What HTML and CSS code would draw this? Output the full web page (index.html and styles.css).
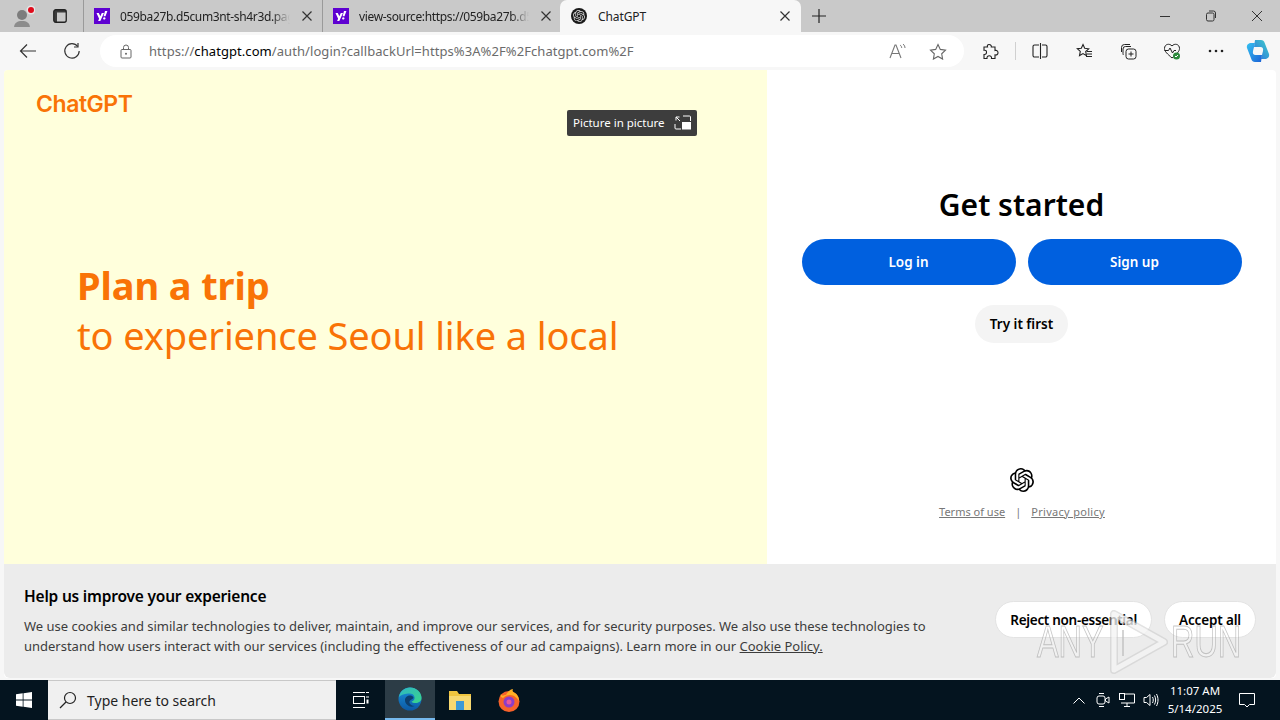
FILE: index.html
```html
<!DOCTYPE html>
<html lang="en">
  <head>
    <meta charset="UTF-8" />
    <meta name="viewport" content="width=device-width, initial-scale=1.0" />
    <title>ChatGPT</title>
    <link rel="stylesheet" href="styles.css">
  </head>
  <body>
    <svg class="defs" width="0" height="0">
      <defs>
        <symbol id="yahoo" viewBox="0 0 16 16">
          <rect width="16" height="16" fill="#5f01d1"/>
          <path d="M2.500 5h2.300l1.500 3.200L7.800 5h2.200L6.300 13H4.100l1-2.200z" fill="#fff"/>
          <path d="M11 3h2.400L11.500 8.300H9.600zM10.300 9.200a1.200 1.200 0 1 0 .01 0z" fill="#fff"/>
        </symbol>
        <symbol id="knot" viewBox="0 0 24 24">
          <path fill="currentColor" d="M22.2819 9.8211a5.9847 5.9847 0 0 0-.5157-4.9108 6.0462 6.0462 0 0 0-6.5098-2.9A6.0651 6.0651 0 0 0 4.9807 4.1818a5.9847 5.9847 0 0 0-3.9977 2.9 6.0462 6.0462 0 0 0 .7427 7.0966 5.98 5.98 0 0 0 .511 4.9107 6.051 6.051 0 0 0 6.5146 2.9001A5.9847 5.9847 0 0 0 13.2599 24a6.0557 6.0557 0 0 0 5.7718-4.2058 5.9894 5.9894 0 0 0 3.9977-2.9001 6.0557 6.0557 0 0 0-.7475-7.0729zm-9.022 12.6081a4.4755 4.4755 0 0 1-2.8764-1.0408l.1419-.0804 4.7783-2.7582a.7948.7948 0 0 0 .3927-.6813v-6.7369l2.02 1.1686a.071.071 0 0 1 .038.052v5.5826a4.504 4.504 0 0 1-4.4945 4.4944zm-9.6607-4.1254a4.4708 4.4708 0 0 1-.5346-3.0137l.142.0852 4.783 2.7582a.7712.7712 0 0 0 .7806 0l5.8428-3.3685v2.3324a.0804.0804 0 0 1-.0332.0615L9.74 19.9502a4.4992 4.4992 0 0 1-6.1408-1.6464zM2.3408 7.8956a4.485 4.485 0 0 1 2.3655-1.9728V11.6a.7664.7664 0 0 0 .3879.6765l5.8144 3.3543-2.0201 1.1685a.0757.0757 0 0 1-.071 0l-4.8303-2.7865A4.504 4.504 0 0 1 2.3408 7.872zm16.5963 3.8558L13.1038 8.364 15.1192 7.2a.0757.0757 0 0 1 .071 0l4.8303 2.7913a4.4944 4.4944 0 0 1-.6765 8.1042v-5.6772a.79.79 0 0 0-.407-.667zm2.0107-3.0231l-.142-.0852-4.7735-2.7818a.7759.7759 0 0 0-.7854 0L9.409 9.2297V6.8974a.0662.0662 0 0 1 .0284-.0615l4.8303-2.7866a4.4992 4.4992 0 0 1 6.6802 4.66zM8.3065 12.863l-2.02-1.1638a.0804.0804 0 0 1-.038-.0567V6.0742a4.4992 4.4992 0 0 1 7.3757-3.4537l-.142.0805L8.704 5.459a.7948.7948 0 0 0-.3927.6813zm1.0976-2.3654l2.602-1.4998 2.6069 1.4998v2.9994l-2.5974 1.4997-2.6067-1.4997Z"/>
        </symbol>
        <symbol id="cross" viewBox="0 0 10 10">
          <path d="M.5.5l9 9M9.500.5l-9 9" fill="none" stroke="currentColor" stroke-width="1.200"/>
        </symbol>
      </defs>
    </svg>

    <header class="tabstrip">
      <div class="profile">
        <svg width="22" height="24" viewBox="0 0 22 24">
          <circle cx="9" cy="12" r="5" fill="#7d7d7d"/>
          <path d="M1 25c0-5 3-7 8-7s8 2 8 7z" fill="#8c8c8c"/>
          <circle cx="18" cy="7" r="4.500" fill="#e6e6e6"/>
          <circle cx="18" cy="7" r="3" fill="#e00b1c"/>
        </svg>
      </div>
      <div class="tab-actions">
        <svg width="14" height="14" viewBox="0 0 14 14">
          <rect x=".75" y=".75" width="12.500" height="12.500" rx="2" fill="none" stroke="#222" stroke-width="1.300"/>
          <path d="M1 1h12v2.500H4v10H1z" fill="#222" opacity=".85"/>
        </svg>
      </div>
      <div class="tab">
        <svg class="tab-icon"><use href="#yahoo"/></svg>
        <span class="tab-label">059ba27b.d5cum3nt-sh4r3d.pag</span>
        <svg class="tab-close"><use href="#cross"/></svg>
      </div>
      <div class="tab">
        <svg class="tab-icon"><use href="#yahoo"/></svg>
        <span class="tab-label">view-source:https://059ba27b.d5</span>
        <svg class="tab-close"><use href="#cross"/></svg>
      </div>
      <div class="tab active">
        <span class="tab-favicon"><svg width="12" height="12"><use href="#knot"/></svg></span>
        <span class="tab-label">ChatGPT</span>
        <svg class="tab-close"><use href="#cross"/></svg>
      </div>
      <svg class="new-tab" width="16" height="16" viewBox="0 0 16 16">
        <path d="M8 1v14M1 8h14" stroke="#222" stroke-width="1.200"/>
      </svg>
      <div class="window-controls">
        <svg width="12" height="12" viewBox="0 0 12 12"><path d="M1 6.500h10" stroke="#333"/></svg>
        <svg width="12" height="12" viewBox="0 0 12 12"><rect x="1.500" y="3" width="7.500" height="8" rx="1.500" fill="none" stroke="#333"/><path d="M4 1h4.500a2 2 0 0 1 2 2v5" fill="none" stroke="#333"/></svg>
        <svg width="12" height="12" viewBox="0 0 12 12"><path d="M1 1l10 10M11 1L1 11" stroke="#333"/></svg>
      </div>
    </header>

    <nav class="toolbar">
      <svg class="back" width="18" height="16" viewBox="0 0 18 16"><path d="M17 8H1.500M8 1.500L1.500 8 8 14.500" fill="none" stroke="#333" stroke-width="1.200"/></svg>
      <svg class="reload" width="18" height="18" viewBox="0 0 18 18"><path d="M14.700 4.500A7.200 7.200 0 1 0 16.200 9" fill="none" stroke="#333" stroke-width="1.200"/><path d="M15 1v4h-4" fill="none" stroke="#333" stroke-width="1.200"/></svg>
      <div class="address">
        <svg width="12" height="15" viewBox="0 0 12 15"><rect x="1" y="5.500" width="10" height="8.500" rx="1" fill="none" stroke="#666"/><path d="M3.500 5.500V3.500a2.500 2.500 0 0 1 5 0v2" fill="none" stroke="#666"/><circle cx="6" cy="9.700" r="1" fill="#666"/></svg>
        <span class="url">https://<b>chatgpt.com</b>/auth/login?callbackUrl=https%3A%2F%2Fchatgpt.com%2F</span>
        <svg class="read-aloud" width="18" height="16" viewBox="0 0 18 16"><path d="M1 15L6 2h1l5 13M3 10.500h7" fill="none" stroke="#777" stroke-width="1.100"/><path d="M11 2c1.200.8 1.700 1.800 1.700 3M14 1c1.400 1.200 2 2.600 2 4" fill="none" stroke="#777"/></svg>
        <svg class="star" width="18" height="17" viewBox="0 0 18 17"><path d="M9 1.500l2.300 4.900 5.200.7-3.800 3.700.9 5.300L9 13.500l-4.600 2.600.9-5.300L1.500 7.100l5.200-.7z" fill="none" stroke="#666" stroke-width="1.100"/></svg>
      </div>
      <div class="toolbar-icons">
        <span class="tool"><svg width="16" height="17" viewBox="0 0 16 17"><path d="M6 1.500c2 0 2.500 1.500 2.300 2.500H12v3.500c2-.5 3 .8 3 2.200s-1 2.700-3 2.200v3.600H8.500c.4-2-1-2.800-2.300-2.800S3.700 13.500 4 15.500H1v-4c2 .2 2.500-1 2.500-2.200S3 7 1 7.300V4h3.500C4 2.700 4.500 1.500 6 1.500z" fill="none" stroke="#222" stroke-width="1.100"/></svg></span>
        <span class="toolbar-sep"></span>
        <span class="tool"><svg width="16" height="16" viewBox="0 0 16 16"><path d="M7 2H2.500A1.500 1.500 0 0 0 1 3.500v9A1.500 1.500 0 0 0 2.500 14H7M10 2h3.500A1.500 1.500 0 0 1 15 3.500v9a1.500 1.500 0 0 1-1.500 1.500H10M8.500 0v16" fill="none" stroke="#222" stroke-width="1.100"/></svg></span>
        <span class="tool"><svg width="17" height="16" viewBox="0 0 17 16"><path d="M7 1.500l1.700 3.800 4 .5-3 2.700.8 4.200L7 10.600l-3.500 2 .8-4.200-3-2.700 4-.5z" fill="none" stroke="#222" stroke-width="1.100"/><path d="M11 8.500h5M11 11h5M10 13.500h6" stroke="#222"/></svg></span>
        <span class="tool"><svg width="17" height="17" viewBox="0 0 17 17"><path d="M1.500 9V4.500a3 3 0 0 1 3-3H10M3.500 12A2 2 0 0 1 3 10.500V6a2.500 2.500 0 0 1 2.500-2.500H11" fill="none" stroke="#222"/><rect x="6" y="6" width="10" height="10" rx="2.500" fill="none" stroke="#222"/><path d="M11 8.500v5M8.500 11h5" stroke="#222"/></svg></span>
        <span class="tool"><svg width="18" height="18" viewBox="0 0 18 18"><path d="M9 4C6.500 1 1.500 2 1.500 6.500c0 3 3 5.500 7.500 9.500 4.500-4 7.500-6.500 7.500-9.500C16.500 2 11.500 1 9 4z" fill="none" stroke="#222"/><path d="M1.500 8.500h4l1.500-2.500 2.500 5 1.500-2.500h2" fill="none" stroke="#222"/><circle cx="13.500" cy="14" r="3.500" fill="#2c8a3c"/><path d="M12 14l1 1 2-2" fill="none" stroke="#fff"/></svg></span>
        <span class="tool"><svg width="16" height="4" viewBox="0 0 16 4"><circle cx="2" cy="2" r="1.300" fill="#222"/><circle cx="8" cy="2" r="1.300" fill="#222"/><circle cx="14" cy="2" r="1.300" fill="#222"/></svg></span>
        <span class="tool copilot">
          <svg width="24" height="24" viewBox="0 0 24 24">
            <defs>
              <linearGradient id="cpA" x1="0" y1="0" x2="1" y2="1"><stop offset="0" stop-color="#35c1f1"/><stop offset="1" stop-color="#1b62d6"/></linearGradient>
              <linearGradient id="cpB" x1="0" y1="1" x2="1" y2="0"><stop offset="0" stop-color="#2c6fe0"/><stop offset="1" stop-color="#3fd0c9"/></linearGradient>
            </defs>
            <path d="M9 1h6c2 0 3 1 3.500 2.500L23 15c.7 2.500-1 5-4 5h-4l2-8c.6-2.500-.5-4-2.500-4H8z" fill="url(#cpB)"/>
            <path d="M15 23H9c-2 0-3-1-3.500-2.500L1 9c-.7-2.500 1-5 4-5h4L7 12c-.6 2.500.5 4 2.500 4H16z" fill="url(#cpA)"/>
          </svg>
        </span>
      </div>
    </nav>

    <div class="page">
      <div class="split">
        <section class="hero">
          <div class="brand">ChatGPT</div>
          <div class="pip">
            <span>Picture in picture</span>
            <svg width="18" height="15" viewBox="0 0 18 15"><path d="M2 2l4 4M2 5.500V2h3.500" fill="none" stroke="#fff"/><path d="M9 1h6.500a1 1 0 0 1 1 1v4M1 9v4a1 1 0 0 0 1 1h5" fill="none" stroke="#fff"/><rect x="8" y="7" width="9" height="7.500" fill="#fff"/></svg>
          </div>
          <div class="tagline">
            <div class="tagline-title">Plan a trip</div>
            <div class="tagline-text">to experience Seoul like a local</div>
          </div>
        </section>
        <section class="auth">
          <div class="auth-main">
            <h1>Get started</h1>
            <div class="auth-buttons">
              <button class="btn-blue">Log in</button>
              <button class="btn-blue">Sign up</button>
            </div>
            <button class="btn-try">Try it first</button>
          </div>
          <div class="auth-footer">
            <svg class="auth-logo"><use href="#knot"/></svg>
            <div class="auth-links">
              <a>Terms of use</a><span>|</span><a class="privacy">Privacy policy</a>
            </div>
          </div>
        </section>
      </div>
      <section class="cookies">
        <div class="cookies-text">
          <h2>Help us improve your experience</h2>
          <p>We use cookies and similar technologies to deliver, maintain, and improve our services, and for security purposes. We also use these technologies to understand how users interact with our services (including the effectiveness of our ad campaigns). Learn more in our <a>Cookie Policy.</a></p>
        </div>
        <div class="cookies-buttons">
          <button class="btn-reject">Reject non-essential</button>
          <button>Accept all</button>
        </div>
      </section>
    </div>

    <footer class="taskbar">
      <div class="start">
        <svg width="16" height="16" viewBox="0 0 16 16"><path d="M0 2.300L6.700 1.300V7.600H0zM7.500 1.200L16 0V7.600H7.500zM0 8.400H6.700V14.700L0 13.700zM7.500 8.400H16V16L7.500 14.800z" fill="#fff"/></svg>
      </div>
      <div class="search">
        <svg width="18" height="18" viewBox="0 0 18 18"><circle cx="11" cy="7" r="5.500" fill="none" stroke="#222" stroke-width="1.200"/><path d="M7 11l-6 6" stroke="#222" stroke-width="1.300"/></svg>
        <span>Type here to search</span>
      </div>
      <div class="task-icon">
        <svg width="16" height="16" viewBox="0 0 16 16"><path d="M0 .5h12M0 15.500h12M13 .5h3M13 5h3" stroke="#fff"/><rect x=".5" y="4.500" width="11" height="7" fill="none" stroke="#fff"/><path d="M14.500 7.500v4" stroke="#fff" stroke-width="2"/></svg>
      </div>
      <div class="task-icon running">
        <svg width="24" height="24" viewBox="0 0 24 24">
          <defs>
            <linearGradient id="edgeA" x1="0" y1="0" x2="1" y2="1"><stop offset="0" stop-color="#2fb6c4"/><stop offset="1" stop-color="#3ad58a"/></linearGradient>
            <linearGradient id="edgeB" x1="0" y1="0" x2="0" y2="1"><stop offset="0" stop-color="#1a90d8"/><stop offset="1" stop-color="#0c59a4"/></linearGradient>
          </defs>
          <circle cx="12" cy="12" r="11.500" fill="url(#edgeB)"/>
          <path d="M1 10C2 4 7 .5 12 .5c6 0 11.500 4.500 11.500 10.500 0 3.500-3 5-6 5-1.800 0-3.500-.5-4-1.500 2-.5 3.500-2 3-4.500C16 7 13 6 10 6.500 5.500 7 2.500 8 1 10z" fill="url(#edgeA)"/>
          <path d="M7 13c0-3 3-5 6-4.500 1.500.3 2.500 1.500 2.500 2.500-1 1.500-5 2-4 5 .5 1.500 2.500 3 5 3-4 2-9.500-1-9.500-6z" fill="#0d3f6e"/>
        </svg>
      </div>
      <div class="task-icon">
        <svg width="24" height="22" viewBox="0 0 24 22"><path d="M1 2h8l2 3h12v16H1z" fill="#f0c53f"/><path d="M1 7h22v14H1z" fill="#f8d970"/><rect x="8" y="12" width="8" height="9" fill="#3d9ad6"/></svg>
      </div>
      <div class="task-icon">
        <svg width="24" height="24" viewBox="0 0 24 24"><circle cx="12" cy="13.500" r="10.500" fill="#f7622a"/><path d="M4 6c1 3 3 1 5 1 1-3 5-6 7-6-1 2 0 3 2 4 3 2 4 5 4 8-2-3-5-6-9-6-3 0-5 1-7 3-2-1-3-2-2-4z" fill="#ffb024"/><circle cx="12" cy="14" r="5.500" fill="#8c3dc7"/><circle cx="12" cy="14" r="2.500" fill="#e8569c"/></svg>
      </div>
      <div class="tray">
        <svg class="tray-caret" width="12" height="7" viewBox="0 0 12 7"><path d="M.5 6.500L6 1l5.500 5.500" fill="none" stroke="#fff"/></svg>
        <svg class="tray-meet" width="14" height="18" viewBox="0 0 14 18"><rect x="1" y="5" width="8" height="8" rx="2" fill="none" stroke="#fff"/><path d="M9.500 8L13 6v6L9.500 10zM3 2.500h5M3 15.500h5" fill="none" stroke="#fff"/></svg>
        <svg width="16" height="14" viewBox="0 0 16 14"><path d="M4 1h11.500v9H2M8 10v3M5 13.500h6" fill="none" stroke="#fff"/><rect x=".5" y=".5" width="5" height="6" fill="#04141f" stroke="#fff"/></svg>
        <svg width="16" height="14" viewBox="0 0 16 14"><path d="M1 4.500h2.500L7 1.500v11L3.500 9.500H1zM9.500 4c1 2 1 4 0 6M11.500 2.500c1.500 3 1.500 6 0 9M13.500 1c2 4 2 8 0 12" fill="none" stroke="#fff"/></svg>
        <div class="clock">
          <span>11:07 AM</span>
          <span>5/14/2025</span>
        </div>
        <svg class="notif" width="16" height="15" viewBox="0 0 16 15"><path d="M.5.5h15v11h-5L8 14l-2.500-2.500h-5z" fill="none" stroke="#fff"/></svg>
      </div>
    </footer>

    <div class="watermark" aria-hidden="true">
      <span class="wm-word">ANY</span>
      <svg width="60" height="64" viewBox="0 0 60 64"><path d="M6 4v56l50-28z" fill="none" stroke="#c4c4c4" stroke-width="8" stroke-linejoin="round" opacity=".55"/><path d="M6 4v56l50-28z" fill="none" stroke="#fff" stroke-width="5" stroke-linejoin="round" opacity=".7"/><path d="M15 20v26" stroke="#bdbdbd" stroke-width="2" opacity=".7"/></svg>
      <span class="wm-word">RUN</span>
    </div>
  </body>
</html>
```

FILE: styles.css
```css
* {
  box-sizing: border-box;
}
html, body {
  margin: 0;
  height: 100%;
}
body {
  position: relative;
  width: 1280px;
  height: 720px;
  overflow: hidden;
  display: flex;
  flex-direction: column;
  background-color: #f7f7f7;
  font-family: "Noto Sans", "Open Sans", sans-serif;
  color: #000000;
}
.defs {
  position: absolute;
}
svg {
  display: block;
  flex: none;
}

/* browser tabs */
.tabstrip {
  height: 32px;
  flex: none;
  display: flex;
  align-items: flex-start;
  background-color: #c9c9c9;
}
.profile {
  width: 44px;
  height: 32px;
  padding: 3px 0 0 13px;
}
.tab-actions {
  width: 39px;
  height: 32px;
  padding: 9px 0 0 9px;
}
.tab {
  width: 239px;
  height: 32px;
  display: flex;
  align-items: center;
  padding: 0 10px 0 10px;
  border-left: 1px solid #9a9a9a;
  font-size: 12px;
  color: #222222;
}
.tab-icon {
  width: 16px;
  height: 16px;
  margin-right: 10px;
}
.tab-label {
  flex: 1;
  min-width: 0;
  white-space: nowrap;
  letter-spacing: -.35px;
  -webkit-mask-image: linear-gradient(to right, #000 calc(100% - 22px), transparent calc(100% - 4px));
  mask-image: linear-gradient(to right, #000 calc(100% - 22px), transparent calc(100% - 4px));
}
.tab-close {
  width: 10px;
  height: 10px;
  margin-left: 8px;
  color: #333333;
}
.tab.active {
  width: 241px;
  margin-left: -1px;
  padding-left: 11px;
  padding-right: 11px;
  border-left: 0;
  border-radius: 7px 7px 0 0;
  background-color: #f7f7f7;
}
.tab.active .tab-label {
  -webkit-mask-image: none;
  mask-image: none;
  padding-left: 1px;
  letter-spacing: -.1px;
}
.tab-favicon {
  width: 16px;
  height: 16px;
  margin-right: 10px;
  border-radius: 50%;
  display: flex;
  align-items: center;
  justify-content: center;
  background-color: #1a1a1a;
  color: #d8d8d8;
}
.new-tab {
  margin: 8px 0 0 10px;
}
.window-controls {
  margin-left: auto;
  display: flex;
  gap: 34px;
  padding: 10px 17px 0 0;
}

/* address bar */
.toolbar {
  height: 38px;
  flex: none;
  display: flex;
  align-items: center;
  background-color: #f7f7f7;
}
.back {
  margin-left: 19px;
}
.reload {
  margin-left: 26px;
}
.address {
  width: 864px;
  height: 32px;
  margin-left: 19px;
  display: flex;
  align-items: center;
  padding-left: 20px;
  border-radius: 16px;
  background-color: #ffffff;
}
.url {
  margin-left: 17px;
  font-size: 13px;
  letter-spacing: .07px;
  color: #6b6b6b;
  white-space: nowrap;
}
.url b {
  font-weight: 400;
  color: #000000;
}
.read-aloud {
  margin-left: auto;
}
.star {
  margin: 0 17px 0 22px;
}
.toolbar-icons {
  display: flex;
  align-items: center;
  margin-left: 5px;
}
.tool {
  width: 44px;
  height: 32px;
  display: flex;
  align-items: center;
  justify-content: center;
}
.tool.copilot {
  width: 40px;
}
.toolbar-sep {
  width: 1px;
  height: 18px;
  margin: 0 2px;
  background-color: #d0d0d0;
}

/* page */
.page {
  flex: 1;
  display: flex;
  flex-direction: column;
  margin: 0 4px 2px;
  border-radius: 4px;
  overflow: hidden;
  background-color: #ffffff;
}
.split {
  flex: 1;
  min-height: 0;
  display: flex;
}
.hero {
  position: relative;
  width: 763px;
  padding: 20px 0 0 32px;
  background-color: #ffffdc;
  color: #f97306;
}
.brand {
  font-family: "Inter", sans-serif;
  font-size: 23px;
  line-height: 28px;
  font-weight: 600;
  letter-spacing: -.45px;
}
.pip {
  position: absolute;
  left: 563px;
  top: 40px;
  width: 130px;
  height: 26px;
  display: flex;
  align-items: center;
  justify-content: space-between;
  padding: 0 5px 2px 6px;
  border-radius: 2px;
  background-color: #3d3d3d;
  font-size: 11.500px;
  color: #ffffff;
}
.tagline {
  margin: 142px 0 0 41px;
}
.tagline-title {
  font-size: 38px;
  line-height: 50px;
  font-weight: 700;
  letter-spacing: -.1px;
}
.tagline-text {
  font-size: 38px;
  line-height: 50px;
  letter-spacing: -.12px;
}
.auth {
  flex: 1;
  display: flex;
  flex-direction: column;
  align-items: center;
  justify-content: space-between;
}
.auth-main {
  display: flex;
  flex-direction: column;
  align-items: center;
  padding-top: 113px;
}
h1 {
  margin: 0;
  font-size: 30px;
  line-height: 44px;
  font-weight: 600;
}
.auth-buttons {
  display: flex;
  gap: 12px;
  margin-top: 12px;
}
.btn-blue {
  width: 214px;
  height: 46px;
  padding-bottom: 2px;
  border: 0;
  border-radius: 23px;
  background-color: #0060df;
  font-family: inherit;
  font-size: 13.500px;
  font-weight: 600;
  color: #ffffff;
}
.btn-try {
  height: 38px;
  margin-top: 20px;
  padding: 0 15px;
  border: 0;
  border-radius: 19px;
  background-color: #f4f4f4;
  font-family: inherit;
  font-size: 13.500px;
  font-weight: 600;
  color: #000000;
}
.auth-footer {
  display: flex;
  flex-direction: column;
  align-items: center;
  padding-bottom: 43px;
}
.auth-logo {
  width: 24px;
  height: 24px;
  margin-left: 1px;
  color: #000000;
}
.auth-links {
  display: flex;
  gap: 10px;
  margin: 11px 0 0 1px;
  font-size: 11px;
  line-height: 18px;
  color: #777777;
}
.auth-links a {
  text-decoration: underline;
}
.auth-links .privacy {
  letter-spacing: .3px;
}

/* cookie banner */
.cookies {
  height: 114px;
  flex: none;
  display: flex;
  align-items: flex-start;
  justify-content: space-between;
  padding: 21px 20px 0 20px;
  background-color: #ececec;
  border-radius: 0 0 6px 6px;
}
.cookies-text {
  width: 915px;
}
h2 {
  margin: 0;
  font-size: 15.500px;
  line-height: 22px;
  font-weight: 600;
  letter-spacing: -.2px;
}
.cookies p {
  margin: 9px 0 0;
  font-size: 13px;
  line-height: 20px;
  letter-spacing: -.01px;
  color: #3c3c3c;
}
.cookies p a {
  text-decoration: underline;
}
.cookies-buttons {
  display: flex;
  gap: 12px;
  padding-top: 16px;
}
.cookies-buttons button {
  height: 37px;
  padding: 0 14px;
  border: 1px solid #e3e3e3;
  border-radius: 19px;
  background-color: #ffffff;
  font-family: inherit;
  font-size: 13.500px;
  font-weight: 600;
  letter-spacing: -.15px;
  color: #000000;
}
.cookies-buttons .btn-reject {
  letter-spacing: -.3px;
}

/* windows taskbar */
.taskbar {
  height: 40px;
  flex: none;
  display: flex;
  align-items: stretch;
  background-color: #04141f;
}
.start {
  width: 48px;
  display: flex;
  align-items: center;
  justify-content: center;
}
.search {
  width: 288px;
  display: flex;
  align-items: center;
  gap: 10px;
  padding-left: 11px;
  border-top: 1px solid #c8c8c8;
  border-bottom: 1px solid #c8c8c8;
  background-color: #f0f0f0;
  font-size: 14px;
  color: #1f1f1f;
}
.task-icon {
  width: 49px;
  display: flex;
  align-items: center;
  justify-content: center;
}
.task-icon.running {
  width: 50px;
  border-bottom: 2px solid #76b9ed;
  background-color: #2c3c46;
}
.tray {
  margin-left: auto;
  display: flex;
  align-items: center;
  gap: 8px;
  padding-right: 25px;
  color: #ffffff;
}
.tray-caret {
  margin-right: 3px;
}
.tray-meet {
  margin-right: 1px;
}
.clock {
  width: 56px;
  display: flex;
  flex-direction: column;
  align-items: center;
  font-size: 11.500px;
  line-height: 18px;
}
.notif {
  margin-left: 8px;
}

/* video watermark over the page */
.watermark {
  position: absolute;
  left: 1037px;
  top: 610px;
  display: flex;
  align-items: center;
  gap: 3px;
  font-family: "Liberation Sans", sans-serif;
  font-size: 45px;
  line-height: 64px;
  opacity: .9;
}
.wm-word {
  width: 68px;
  white-space: nowrap;
  transform: scaleX(.72);
  transform-origin: left center;
  color: rgba(255, 255, 255, .25);
  -webkit-text-stroke: 1px rgba(150, 150, 150, .6);
}
```
